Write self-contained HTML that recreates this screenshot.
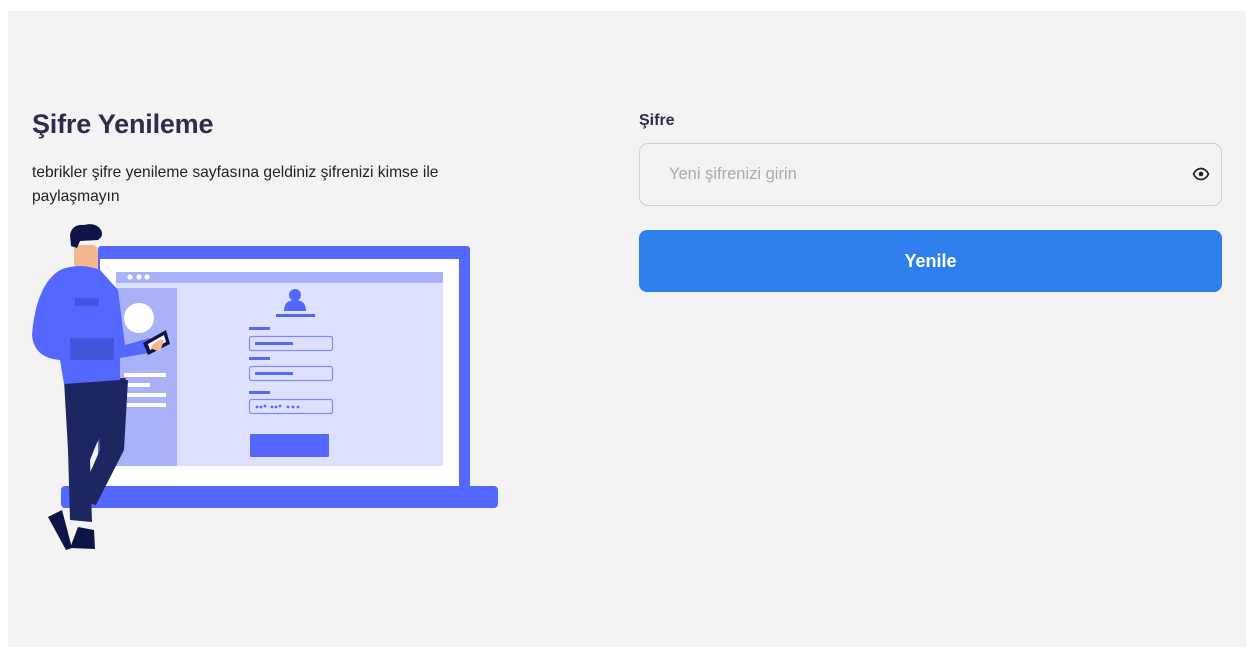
<!DOCTYPE html>
<html><head><meta charset="utf-8"><style>
body{margin:0;width:1255px;height:657px;background:#fff;font-family:"Liberation Sans",sans-serif;position:relative;overflow:hidden}
.panel{position:absolute;left:8px;top:11px;width:1238px;height:636px;background:#f3f3f3}
h1{position:absolute;left:32px;top:109px;margin:0;font-size:27px;font-weight:bold;color:#2b2d4e;letter-spacing:-0.2px}
.desc{position:absolute;left:32px;top:161px;width:440px;font-size:15.6px;line-height:23.5px;color:#222}
.lbl{position:absolute;left:639px;top:112px;font-size:16px;font-weight:bold;color:#2b2d4e}
.inp{position:absolute;left:639px;top:143px;width:581px;height:61px;border:1px solid #cfcfd4;border-radius:9px}
.ph{position:absolute;left:29px;top:21px;font-size:16.5px;color:#a9a9ae}
.btn{position:absolute;left:639px;top:230px;width:583px;height:62px;background:#2f80ed;border-radius:8px;color:#fff;font-weight:bold;font-size:18px;text-align:center;line-height:62px}
</style></head><body>
<div class="panel"></div>
<h1>Şifre Yenileme</h1>
<div class="desc">tebrikler şifre yenileme sayfasına geldiniz şifrenizi kimse ile paylaşmayın</div>
<div class="lbl">Şifre</div>
<div class="inp"><span class="ph">Yeni şifrenizi girin</span>
<svg style="position:absolute;left:552px;top:23px" width="18" height="14" viewBox="0 0 18 14"><path d="M1.5 7C3.5 3 6 1.5 9 1.5S14.5 3 16.5 7C14.5 11 12 12.5 9 12.5S3.5 11 1.5 7Z" fill="none" stroke="#222" stroke-width="1.7"/><circle cx="9" cy="7" r="2.3" fill="#222"/></svg></div>
<div class="btn">Yenile</div>
<svg style="position:absolute;left:0;top:0" width="520" height="560" viewBox="0 0 520 560">
<rect x="98" y="246" width="372" height="245" rx="3" fill="#5468ff"/>
<rect x="100" y="259" width="359" height="228" fill="#fff"/>
<rect x="116" y="272" width="327" height="194" fill="#dee1fd"/>
<rect x="116" y="272" width="327" height="11" rx="2" fill="#a9b1fb"/>
<circle cx="130" cy="277" r="2.6" fill="#fff"/><circle cx="139" cy="277" r="2.6" fill="#fff"/><circle cx="147" cy="277" r="2.6" fill="#fff"/>
<rect x="116" y="288" width="61" height="178" fill="#a9b1fb"/>
<circle cx="139" cy="318" r="15" fill="#fff"/>
<rect x="124" y="373" width="42" height="4" fill="#fff"/><rect x="124" y="383" width="26" height="4" fill="#fff"/><rect x="124" y="393" width="42" height="4" fill="#fff"/><rect x="124" y="403" width="42" height="4" fill="#fff"/>
<circle cx="295" cy="295" r="6" fill="#5468ff"/><path d="M284 311Q284 300 295 300Q306 300 306 311Z" fill="#5468ff"/>
<rect x="276" y="314" width="39" height="3" fill="#5468ff"/>
<rect x="249" y="327" width="21" height="3" fill="#5468ff"/><rect x="249" y="357" width="21" height="3" fill="#5468ff"/><rect x="249" y="391" width="21" height="3" fill="#5468ff"/>
<g fill="none" stroke="#7f8cf8" stroke-width="1.2"><rect x="249.5" y="336.5" width="83" height="14" rx="2"/><rect x="249.5" y="366.5" width="83" height="14" rx="2"/><rect x="249.5" y="399.5" width="83" height="14" rx="2"/></g>
<rect x="255" y="342" width="38" height="3" fill="#5468ff"/><rect x="255" y="372" width="38" height="3" fill="#5468ff"/>
<g fill="#5468ff"><circle cx="257" cy="407" r="1.4"/><circle cx="261" cy="407" r="1.4"/><circle cx="265" cy="406" r="1.4"/><circle cx="272" cy="407" r="1.4"/><circle cx="276" cy="407" r="1.4"/><circle cx="280" cy="406" r="1.4"/><circle cx="288" cy="407" r="1.4"/><circle cx="293" cy="407" r="1.4"/><circle cx="298" cy="407" r="1.4"/></g>
<rect x="250" y="434" width="79" height="23" rx="1" fill="#5468ff"/>
<rect x="61" y="486" width="437" height="22" rx="4" fill="#5468ff"/>
<path d="M64 380L68 450L70 520L92 522L90 460L96 445L118 400L126 378Z" fill="#1d2660"/>
<path d="M96 380L128 380L124 450L96 505L78 500L100 450Z" fill="#1d2660"/>
<path d="M62 510L48 517L66 550L72 548Z" fill="#0f1447"/>
<path d="M78 527L70 548L95 549L94 530Z" fill="#0f1447"/>
<rect x="74" y="245" width="24" height="24" rx="6" fill="#f4b88f"/>
<path d="M86 262L98 262L98 280L78 280Z" fill="#f4b88f"/>
<path d="M70 235Q72 224 84 225Q96 222 101 230Q104 236 98 240L80 241L77 248L71 246Z" fill="#0f1447"/>
<path d="M60 270Q80 262 100 270L118 290L125 345L150 338L155 352L120 358L120 380L64 384L60 360Q34 358 32 335Q36 285 60 270Z" fill="#5468ff"/>
<rect x="75" y="298" width="24" height="8" fill="#4455dd"/>
<rect x="70" y="338" width="44" height="22" fill="#4455dd"/>
<path d="M143 343L166 330L170 344L148 355Z" fill="#0f1447"/><path d="M148 344L164 335L166 342L150 350Z" fill="#fff"/>
<path d="M150 348Q158 338 164 340L160 352Z" fill="#f4b88f"/>
</svg>
</body></html>
